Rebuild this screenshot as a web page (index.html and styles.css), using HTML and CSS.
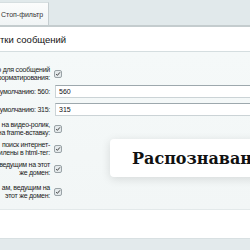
FILE: index.html
```html
<!DOCTYPE html>
<html lang="ru">
  <head>
    <meta charset="UTF-8" />
    <meta name="viewport" content="width=device-width, initial-scale=1.0" />
    <title>Стоп-фильтр</title>
    <link rel="stylesheet" href="styles.css">
  </head>
  <body>
    <!-- вкладки -->
    <div class="tabs">
      <div class="tab">Стоп-фильтр</div>
    </div>
    <!-- заголовок -->
    <div class="head">тки сообщений</div>
    <!-- форма настроек -->
    <div class="form">
      <div class="row row-1">
        <div class="label"><span>о для сообщений</span><span>форматирования:</span></div>
        <div class="field"><i class="check"></i></div>
      </div>
      <div class="row row-2">
        <div class="label"><span>умолчанию: 560:</span></div>
        <div class="field"><input class="text" type="text" value="560"></div>
      </div>
      <div class="row row-3">
        <div class="label"><span>умолчанию: 315:</span></div>
        <div class="field"><input class="text" type="text" value="315"></div>
      </div>
      <div class="row row-4">
        <div class="label"><span>на видео-ролик,</span><span>на frame-вставку:</span></div>
        <div class="field"><i class="check"></i></div>
      </div>
      <div class="row row-5">
        <div class="label"><span>поиск интернет-</span><span>илены в html-тег:</span></div>
        <div class="field"><i class="check"></i></div>
      </div>
      <div class="row row-6">
        <div class="label"><span>ведущим на этот</span><span>же домен:</span></div>
        <div class="field"><i class="check"></i></div>
      </div>
      <div class="row row-7">
        <div class="label"><span>ам, ведущим на</span><span>этот же домен:</span></div>
        <div class="field"><i class="check"></i></div>
      </div>
    </div>
    <!-- кнопки -->
    <div class="buttons"></div>
    <div class="bottom"></div>
    <!-- подсказка -->
    <div class="tip">Распознавание</div>
  </body>
</html>
```

FILE: styles.css
```css
/* сброс */
* {
  margin: 0;
  padding: 0;
  box-sizing: border-box;
}
body {
  width: 250px;
  height: 250px;
  overflow: hidden;
  position: relative;
  font-family: "Liberation Sans", Arial, sans-serif;
  color: #222;
  background: #e3eaec;
}
/* вкладки */
.tabs {
  height: 27px;
  padding-top: 2px;
  background: #e1e9eb;
  border-bottom: 2px solid #c4ccce;
}
.tab {
  width: 49px;
  height: 23px;
  padding: 7px 0 0 1px;
  font-size: 7px;
  line-height: 9px;
  color: #333;
  background: linear-gradient(#fbfcfc, #f0f4f5);
  border-top: 1px solid #d6dee0;
  border-right: 1px solid #c5cdd0;
  white-space: nowrap;
  overflow: hidden;
}
/* заголовок */
.head {
  height: 25px;
  padding-top: 7px;
  font-size: 9.5px;
  line-height: 12px;
  color: #111;
  background: #fff;
  border-bottom: 1px solid #d5dee0;
}
/* форма */
.form {
  height: 158px;
  padding-top: 14px;
  background: linear-gradient(#f5f9f9, #f2f6f6);
  border-bottom: 1px solid #e3e9ea;
}
.row {
  display: flex;
  align-items: center;
}
.label {
  width: 50px;
  display: flex;
  flex-direction: column;
  align-items: flex-end;
  font-size: 7px;
  line-height: 8px;
  letter-spacing: -0.25px;
  color: #222;
}
.label span {
  white-space: nowrap;
}
.field {
  flex: 1;
  display: flex;
  align-items: center;
  padding-left: 4px;
}
.row-2 {
  margin-top: 3px;
}
.row-3,
.row-4 {
  margin-top: 5px;
}
.row-5,
.row-6 {
  margin-top: 4px;
}
.row-7 {
  margin-top: 7px;
}
/* чекбокс */
.check {
  display: block;
  width: 8px;
  height: 8px;
  border: 1px solid #9aa3a7;
  border-radius: 2px;
  background: #e4e9eb url("data:image/svg+xml,%3Csvg xmlns='http://www.w3.org/2000/svg' viewBox='0 0 8 8'%3E%3Cpath d='M1.5 4.2 3.2 5.8 6.6 1.8' fill='none' stroke='%23333' stroke-width='1.2'/%3E%3C/svg%3E") center/6px 6px no-repeat;
}
/* поле ввода */
.text {
  display: block;
  width: 200px;
  height: 13px;
  margin-left: 1px;
  padding: 0 3px;
  font-family: inherit;
  font-size: 7px;
  color: #111;
  background: #fff;
  border: 1px solid #cbd3d6;
  border-top-color: #9da8ad;
  outline: none;
}
/* низ */
.buttons {
  height: 29px;
  background: #fff;
  border-bottom: 1px solid #d8e0e2;
}
.bottom {
  height: 10px;
  background: #e3eaec;
}
/* подсказка поверх формы */
.tip {
  position: absolute;
  left: 110px;
  top: 139px;
  width: 170px;
  height: 38px;
  padding: 10px 0 0 22px;
  background: #fff;
  border-radius: 4px;
  box-shadow: 0 2px 10px rgba(0, 0, 0, 0.12);
  font-family: "DejaVu Serif", serif;
  font-weight: bold;
  font-size: 16px;
  line-height: 19px;
  color: #111;
  white-space: nowrap;
  overflow: hidden;
}
```
